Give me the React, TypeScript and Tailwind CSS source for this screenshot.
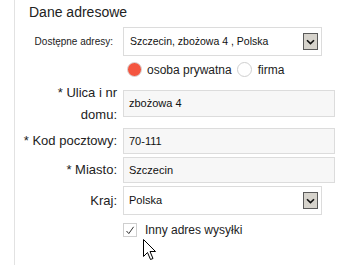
const font = { fontFamily: '"Liberation Sans", Arial, sans-serif' };

function DropButton() {
  return (
    <span className="flex h-[17px] w-[15px] items-center justify-center border border-[#5a5a5a] bg-[#d6d3cc]">
      <svg width="9" height="6" viewBox="0 0 9 6">
        <path d="M1 1.2 L4.5 4.6 L8 1.2" fill="none" stroke="#111" strokeWidth="1.6" />
      </svg>
    </span>
  );
}

function Radio({ checked }: { checked?: boolean }) {
  return (
    <span
      className={`block h-[15px] w-[15px] shrink-0 rounded-full border ${
        checked ? "border-[#d9d9d9] bg-[#f4553f]" : "border-[#cfcfcf] bg-white"
      }`}
    />
  );
}

export default function App() {
  return (
    <div className="relative h-[265px] w-[351px] overflow-hidden bg-white text-[#333]" style={font}>
      <div className="ml-[14px] h-full border-l border-[#e2e2e2]">
        <h2 className="pl-[14px] pt-[4px] text-[14px] leading-[16px] text-[#222]">Dane adresowe</h2>

        {/* Dostępne adresy */}
        <div className="mt-[7px] flex items-center">
          <label className="w-[108px] pr-[10px] text-right text-[10px] text-[#222]">Dostępne adresy:</label>
          <div className="flex h-[29px] w-[199px] items-center justify-between border border-[#dcdcdc] bg-white pl-[6px] pr-[3px]">
            <span className="text-[10.5px] text-[#111]">Szczecin, zbożowa 4 , Polska</span>
            <DropButton />
          </div>
        </div>

        {/* typ klienta */}
        <div className="mt-[6px] flex h-[15px] items-center pl-[112px] text-[12px] text-[#222]">
          <Radio checked />
          <span className="ml-[5px]">osoba prywatna</span>
          <span className="ml-[5px]">
            <Radio />
          </span>
          <span className="ml-[6px]">firma</span>
        </div>

        {/* Ulica */}
        <div className="mt-[5px] flex items-start">
          <label className="w-[108px] pr-[6px] text-right text-[13px] leading-[22px] text-[#222]">
            * Ulica i nr
            <br />
            domu:
          </label>
          <div className="mt-[8px] flex h-[27px] w-[212px] items-center border border-[#dcdcdc] bg-[#f7f7f7] pl-[5px] text-[11px] text-[#111]">
            zbożowa 4
          </div>
        </div>

        {/* Kod */}
        <div className="mt-[2px] flex items-center">
          <label className="w-[108px] pr-[6px] text-right text-[13px] text-[#222]">* Kod pocztowy:</label>
          <div className="flex h-[26px] w-[212px] items-center border border-[#dcdcdc] bg-[#f7f7f7] pl-[5px] text-[11px] text-[#111]">
            70-111
          </div>
        </div>

        {/* Miasto */}
        <div className="mt-[3px] flex items-center">
          <label className="w-[108px] pr-[6px] text-right text-[13px] text-[#222]">* Miasto:</label>
          <div className="flex h-[26px] w-[212px] items-center border border-[#dcdcdc] bg-[#f7f7f7] pl-[5px] text-[11px] text-[#111]">
            Szczecin
          </div>
        </div>

        {/* Kraj */}
        <div className="mt-[3px] flex items-center">
          <label className="w-[108px] pr-[6px] text-right text-[13px] text-[#222]">Kraj:</label>
          <div className="flex h-[29px] w-[199px] items-center justify-between border border-[#dcdcdc] bg-white pl-[5px] pr-[3px]">
            <span className="text-[11px] text-[#111]">Polska</span>
            <DropButton />
          </div>
        </div>

        {/* Inny adres */}
        <div className="mt-[8px] flex h-[14px] items-center pl-[108px] text-[12px] text-[#222]">
          <span className="flex h-[14px] w-[14px] items-center justify-center border border-[#cfcfcf] bg-white">
            <svg width="10" height="9" viewBox="0 0 10 9">
              <path d="M1.5 5 L3.8 7.6 L8.6 0.8" fill="none" stroke="#333" strokeWidth="1" />
            </svg>
          </span>
          <span className="ml-[8px]">Inny adres wysyłki</span>
        </div>
      </div>

      {/* kursor */}
      <svg className="absolute left-[143px] top-[239px]" width="14" height="24" viewBox="0 0 14 24">
        <path
          d="M0.5 0.5 L0.5 17.5 L4.5 13.5 L7.5 20.5 L10 19.5 L7 12.5 L12.5 12.5 Z"
          fill="#fff"
          stroke="#000"
          strokeWidth="1"
          strokeLinejoin="miter"
        />
      </svg>
    </div>
  );
}
